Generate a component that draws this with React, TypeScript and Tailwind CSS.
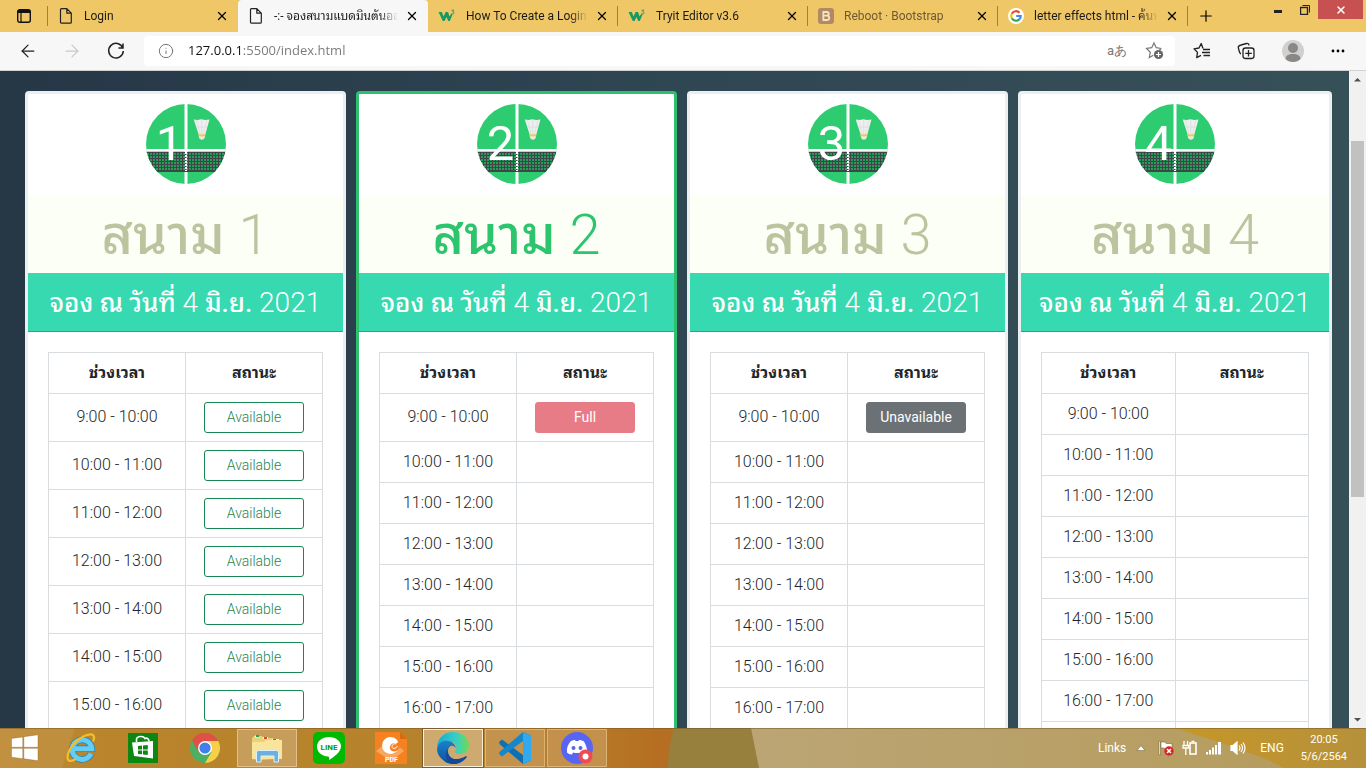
import React from "react";
import { ArrowLeft, ArrowRight, Info, Plus, X } from "lucide-react";

type Status = "Available" | "Full" | "Unavailable";
type Court = { id: number; selected?: boolean; statuses: Status[] };

const slots = [
  "9:00 - 10:00",
  "10:00 - 11:00",
  "11:00 - 12:00",
  "12:00 - 13:00",
  "13:00 - 14:00",
  "14:00 - 15:00",
  "15:00 - 16:00",
  "16:00 - 17:00",
  "17:00 - 18:00",
];

const courts: Court[] = [
  { id: 1, statuses: slots.map((): Status => "Available") },
  { id: 2, selected: true, statuses: ["Full"] },
  { id: 3, statuses: ["Unavailable"] },
  { id: 4, statuses: [] },
];

const statusStyle: Record<Status, string> = {
  Available: "border-[#198754] bg-white font-light text-[#198754]",
  Full: "border-[#e77c87] bg-[#e77c87] font-normal text-white",
  Unavailable: "border-[#6c7176] bg-[#6c7176] font-normal text-white",
};

function W3Icon() {
  return (
    <svg viewBox="0 0 18 16" className="h-4 w-[18px] shrink-0">
      <path d="M.5 4h3.300l1.700 4.500L7.700 4H10l1.500 4.500 1.700-2.500 1.300.5-2.700 6.500h-1.500L8.500 9l-2 4H4.800z" fill="#149a63" />
      <path d="M13.600 2.200h2.200l-1.100 1.500c1.800 0 1.600 2.400-.1 2.300-.6 0-1-.3-1.200-.7" fill="none" stroke="#149a63" strokeWidth="0.900" />
    </svg>
  );
}

function BootstrapIcon() {
  return (
    <svg viewBox="0 0 16 16" className="size-4 shrink-0">
      <rect width="16" height="16" rx="3" fill="#b08a66" />
      <path d="M5.300 4h3.500c2.600 0 2.600 3.500 0 3.700 3.200.1 3.200 4.300 0 4.300H5.300zM5.300 7.700h3.500" fill="none" stroke="#f4e3c0" strokeWidth="1.800" />
    </svg>
  );
}

function GoogleIcon() {
  return (
    <svg viewBox="0 0 16 16" className="size-4 shrink-0">
      <circle cx="8" cy="8" r="8" fill="#fff" />
      <g fill="none" strokeWidth="2.200">
        <path d="M11.500 4.700A4.800 4.800 0 0 0 3.800 5.700" stroke="#ea4335" />
        <path d="M3.800 5.700a4.800 4.800 0 0 0 0 4.600" stroke="#fbbc05" />
        <path d="M3.800 10.300a4.800 4.800 0 0 0 7.500 1.100" stroke="#34a853" />
        <path d="M11.300 11.400A4.500 4.500 0 0 0 12.700 8H8.200" stroke="#4285f4" />
      </g>
    </svg>
  );
}

function PageIcon() {
  return (
    <svg viewBox="0 0 16 16" className="size-4 shrink-0" fill="none" stroke="#222" strokeWidth="1.200" strokeLinejoin="round">
      <path d="M3.500.7h5.300l4.500 4.500v9q0 1-1 1h-8.800q-1 0-1-1V1.700q0-1 1-1zM8.800.7v4.500h4.500" />
    </svg>
  );
}

type TabInfo = { title: string; icon: React.ReactNode; active?: boolean; dim?: boolean };

const tabs: TabInfo[] = [
  { title: "Login", icon: <PageIcon /> },
  { title: "-:- จองสนามแบดมินตันออนไลน์", icon: <PageIcon />, active: true },
  { title: "How To Create a Login Form", icon: <W3Icon /> },
  { title: "Tryit Editor v3.6", icon: <W3Icon /> },
  { title: "Reboot · Bootstrap", icon: <BootstrapIcon />, dim: true },
  { title: "letter effects html - ค้นหาด้วย", icon: <GoogleIcon /> },
];

function TabStrip() {
  return (
    <div className="flex h-8 shrink-0 items-stretch bg-[#efc767]">
      <button aria-label="Tab actions" className="flex w-12 shrink-0 items-center justify-end">
        <svg viewBox="0 0 14 14" className="mr-4 size-[14px]" fill="none" stroke="#111">
          <rect x="0.700" y="0.700" width="12.600" height="12.600" rx="2" strokeWidth="1.400" />
          <path d="M1 2.500h12" strokeWidth="3" />
          <path d="M4 4v9" strokeWidth="1.200" />
        </svg>
        <span className="h-5 w-px bg-[#9b8143]" />
      </button>
      {tabs.map((tab, i) => (
        <div
          key={tab.title}
          className={`flex w-[190px] min-w-0 items-center pl-[10px] ${tab.active ? "rounded-t bg-[#f7f7f7]" : ""}`}
        >
          <button className={`flex min-w-0 flex-1 items-center gap-[10px] text-xs ${tab.dim ? "text-[#6d5a34]" : "text-[#1a1a1a]"}`}>
            {tab.icon}
            <span className="flex-1 overflow-hidden text-left whitespace-nowrap [mask-image:linear-gradient(to_right,black_85%,transparent)]">
              {tab.title}
            </span>
          </button>
          <button aria-label="Close tab" className="ml-1 flex w-5 justify-center">
            <X className="size-[14px]" strokeWidth={2.2} />
          </button>
          <span className={`ml-[5px] h-5 w-px ${i >= 2 ? "bg-[#9b8143]" : ""}`} />
        </div>
      ))}
      <button aria-label="New tab" className="flex w-9 items-center justify-center">
        <Plus className="size-[18px]" strokeWidth={1.6} />
      </button>
      <div className="ml-auto flex items-start">
        <button aria-label="Minimize" className="flex h-[22px] w-[26px] items-center justify-center">
          <span className="h-[3px] w-2 bg-[#222]" />
        </button>
        <button aria-label="Restore" className="flex h-[19px] w-[27px] items-center justify-center">
          <svg viewBox="0 0 10 10" className="size-[10px]" fill="none" stroke="#222">
            <rect x="0.500" y="2.500" width="7" height="7" strokeWidth="1.400" />
            <path d="M2.500.5h7v7" />
          </svg>
        </button>
        <button aria-label="Close" className="mr-[3px] flex h-[19px] w-[45px] items-center justify-center bg-[#c75050] text-white">
          <X className="size-3" strokeWidth={3} />
        </button>
      </div>
    </div>
  );
}

function Toolbar() {
  return (
    <div className="flex h-[39px] shrink-0 items-center border-b border-[#cfd3d6] bg-[#f7f7f7] text-[#222]">
      <div className="flex w-36 items-center gap-6 pl-[18px]">
        <button aria-label="Back"><ArrowLeft className="size-5" strokeWidth={1.5} /></button>
        <button aria-label="Forward"><ArrowRight className="size-5 text-[#c9c9c9]" strokeWidth={1.5} /></button>
        <button aria-label="Refresh">
          <svg viewBox="0 0 20 20" className="size-5" fill="none" stroke="currentColor" strokeWidth="1.500">
            <path d="M16.800 7A7.300 7.300 0 1 0 17.300 10M17 2.500V7h-4.500" />
          </svg>
        </button>
      </div>
      <div className="flex h-[30px] flex-1 items-center rounded bg-white pr-[10px] pl-[14px]">
        <Info className="size-4 text-[#777]" strokeWidth={1.5} />
        <label htmlFor="address" className="sr-only">Address</label>
        <input
          id="address"
          defaultValue="127.0.0.1:5500/index.html"
          className="ml-[14px] min-w-0 flex-1 bg-[linear-gradient(to_right,#111_54px,#777_54px)] bg-clip-text font-['Open_Sans',sans-serif] text-[13px] text-transparent outline-none"
        />
        <button className="text-[13px] text-[#777]">aあ</button>
        <button aria-label="Add to favorites" className="ml-[18px]">
          <svg viewBox="0 0 20 20" className="size-5" fill="none" stroke="#777" strokeWidth="1.200">
            <path d="M16.300 7.500l-5.100-.8L9 2 6.700 6.700l-5.200.8 3.800 3.700-1 5.300 4-2.200M16.300 7.500l-2 1.800" />
            <circle cx="13.500" cy="13.500" r="4.600" fill="#666" stroke="none" />
            <path d="M13.500 11v5M11 13.500h5" stroke="white" />
          </svg>
        </button>
      </div>
      <div className="flex w-[191px] items-center justify-between pr-5 pl-[18px]">
        <button aria-label="Favorites">
          <svg viewBox="0 0 18 18" className="size-[18px]" fill="none" stroke="currentColor" strokeWidth="1.300">
            <path d="M10 6.500L8.200 1.500 6 6l-5 .8 3.500 3.600-.8 5.200L8 13.400M10 7.500h7M9 10.500h8M10.500 13.500H17" strokeLinejoin="round" />
          </svg>
        </button>
        <button aria-label="Collections">
          <svg viewBox="0 0 18 18" className="size-[18px]" fill="none" stroke="currentColor" strokeWidth="1.300">
            <path d="M4 12C2.500 11.500 2 9 1.300 5.500 1.200 3.800 2.500 3.300 4 3l5.500-1.500c1.500-.3 2.300.5 2.500 2" />
            <rect x="6" y="6" width="11" height="10.500" rx="2.500" />
            <path d="M11.500 8v6.500M8.300 11.300h6.500" />
          </svg>
        </button>
        <button aria-label="Profile">
          <svg viewBox="0 0 22 22" className="size-[22px]">
            <circle cx="11" cy="11" r="11" fill="#d2d0ce" />
            <circle cx="11" cy="8" r="5" fill="#8a8886" />
            <path d="M3.500 19c0-3.500 3-5 7.500-5s7.500 1.500 7.500 5c-3.800 4-11.200 4-15 0z" fill="#8a8886" />
          </svg>
        </button>
        <button aria-label="Settings and more">
          <svg viewBox="0 0 16 16" className="size-4"><circle cx="3" cy="8" r="1.400" /><circle cx="8" cy="8" r="1.400" /><circle cx="13" cy="8" r="1.400" /></svg>
        </button>
      </div>
    </div>
  );
}

function CourtLogo({ id }: { id: number }) {
  return (
    <svg viewBox="0 0 80 80" className="size-20">
      <defs>
        <clipPath id={`disc-${id}`}><circle cx="40" cy="40" r="40" /></clipPath>
        <pattern id={`net-${id}`} width="3" height="3" patternUnits="userSpaceOnUse">
          <path d="M0 .5h3M.5 0v3" stroke="#3f4548" />
        </pattern>
      </defs>
      <g clipPath={`url(#disc-${id})`}>
        <rect width="80" height="80" fill="#2ecc71" />
        <rect x="38.500" width="3" height="80" fill="#fff" />
        <rect y="48" width="80" height="20" fill="#25794c" fillOpacity="0.600" />
        <rect y="48" width="80" height="20" fill={`url(#net-${id})`} />
        <path d="M0 67.500h80" stroke="#3f4548" />
        <rect y="45" width="80" height="2.500" fill="#fff" />
        <path d="M40 48v19" stroke="#fff" strokeWidth="2" strokeDasharray="2 1" />
      </g>
      <text x="23.500" y="55.500" textAnchor="middle" fill="#fff" fontSize="49" className="font-[Roboto,sans-serif]">{id}</text>
      <path d="M47.700 15.500l4 .5 3.500-.8 4 .8 4.300-.5L59 31.500h-6z" fill="#edf0ee" />
      <path d="M50.500 16l3.500 14M55.700 16v14M61 16l-3.500 14M50 23h11" stroke="#d3d9d6" strokeWidth="0.600" />
      <path d="M52.800 32H59c.2 5-6.400 5-6.200 0z" fill="#e6e8e6" />
      <path d="M52.300 31.200h7" stroke="#f0c75a" strokeWidth="2" />
    </svg>
  );
}

function CourtCard({ court }: { court: Court }) {
  return (
    <section className={`overflow-hidden rounded border-[3px] bg-white text-center ${court.selected ? "border-[#2ebf6f]" : "border-[#eceff1]"}`}>
      <div className="flex justify-center pt-[10px] pb-[11px]"><CourtLogo id={court.id} /></div>
      <h2 className={`h-[78px] bg-[#fbfff5] pt-1 text-[56px] leading-[72px] font-light ${court.selected ? "text-[#2dc46e]" : "text-[#bcc49f]"}`}>
        <span className="text-[54px] font-medium">สนาม</span> {court.id}
      </h2>
      <p className="h-[59px] border-b border-[#27ae60] bg-[#37d9b0] pt-px text-[28px] leading-[57px] font-light whitespace-nowrap text-white">
        <span className="text-[26px] font-medium">จอง ณ วันที่</span> 4 <span className="text-[26px] font-medium">มิ.ย.</span> 2021
      </p>
      <div className="p-5">
        <table className="w-full table-fixed border-collapse text-base text-[#212529] [&_td]:border [&_td]:border-[#dadde0] [&_td]:p-2 [&_td]:align-baseline [&_th]:border [&_th]:border-[#dadde0] [&_th]:p-2">
          <thead>
            <tr><th className="font-bold">ช่วงเวลา</th><th className="font-bold">สถานะ</th></tr>
          </thead>
          <tbody>
            {slots.map((slot, i) => {
              const status = court.statuses[i];
              return (
                <tr key={slot}>
                  <td className="font-light">{slot}</td>
                  <td>
                    {status && (
                      <button className={`mx-auto block h-[31px] w-[100px] rounded-[3px] border pb-[2px] text-sm leading-5 ${statusStyle[status]}`}>
                        {status}
                      </button>
                    )}
                  </td>
                </tr>
              );
            })}
          </tbody>
        </table>
      </div>
    </section>
  );
}

function Scrollbar() {
  return (
    <div className="flex w-[17px] shrink-0 flex-col items-center bg-[#f1f1f1]">
      <svg viewBox="0 0 17 17" className="size-[17px]"><path d="M5 10.500L8.500 7l3.500 3.500z" fill="#505050" /></svg>
      <div className="h-[53px]" />
      <div className="h-[356px] w-[13px] bg-[#c1c1c1]" />
      <div className="flex-1" />
      <svg viewBox="0 0 17 17" className="size-[17px]"><path d="M5 7l3.500 3.500L12 7z" fill="#505050" /></svg>
    </div>
  );
}

const appIcons: Record<string, React.ReactNode> = {
  Start: (
    <svg viewBox="0 0 28 28" className="size-7" fill="#fff" stroke="#8e6423" strokeWidth="0.400">
      <path d="M.5 4.500l11.300-1.600v10.400H.5zM12.800 2.700L27 .8v12.500H12.800zM.5 14.300h11.300v10.400L.5 23.200zM12.800 14.300H27v12.500l-14.200-2z" />
    </svg>
  ),
  "Internet Explorer": (
    <svg viewBox="0 0 32 32" className="size-8">
      <path d="M26 21.500A9.800 9.800 0 1 1 26.800 16.800H9" fill="none" stroke="#2682bb" strokeWidth="6.500" />
      <path d="M26 21.500A9.800 9.800 0 1 1 26.800 16.800H9" fill="none" stroke="#64cdf1" strokeWidth="5" />
      <path d="M28 9.500C30.500 4 28.500 1 22 3 12 6 2 18 2.500 26c.2 4 4.500 3.500 8.500 1" fill="none" stroke="#f4bd29" strokeWidth="2.300" />
    </svg>
  ),
  Store: (
    <svg viewBox="0 0 30 30" className="size-[30px]">
      <rect width="30" height="30" fill="#0b8712" />
      <path d="M8.500 9V6.500c0-3.500 7-4 8.500-1 1.500-1 4 0 4 3" fill="none" stroke="#fff" strokeWidth="1.600" />
      <path d="M4 9.500L25 8v17.500L6 23z" fill="#fff" />
      <path d="M10 13l4-.4v4h-4zM15 12.500l4.800-.5v4.600H15zM10 17.500h4v3.800l-4-.4zM15 17.500h4.800V22l-4.800-.5z" fill="#0b8712" />
    </svg>
  ),
  Chrome: (
    <svg viewBox="0 0 30 30" className="size-[30px]">
      <circle cx="15" cy="15" r="15" fill="#4caf61" />
      <path d="M2 7.500l7 12 6-4.500 13-7.500A15 15 0 0 0 2 7.500z" fill="#df5146" />
      <path d="M15 8h13.300A15 15 0 0 1 15 30l6.500-11z" fill="#f8cf48" />
      <circle cx="15" cy="15" r="7" fill="#fff" /><circle cx="15" cy="15" r="5.600" fill="#427fed" />
    </svg>
  ),
  "File Explorer": (
    <svg viewBox="0 0 32 30" className="h-[30px] w-8">
      <path d="M1 5l2-2h8l2 2h9l1 2h8v19H1z" fill="#e9d178" /><path d="M4 2.500h4v2H4zM12 4h5v2h-5zM21 6h7v2h-7z" fill="#f9f9ef" />
      <path d="M5 2h3v2H5z" fill="#26a455" /><path d="M13 4h3v2h-3z" fill="#d94836" /><path d="M22 6h3v2h-3z" fill="#2e85cd" />
      <path d="M1 9h12l2-2h16v19c-9-1-20 2-30 0z" fill="#f8e59b" />
      <path d="M5.500 29V19.500q0-2 2-2h18q2 0 2 2V29H23v-6H10v6z" fill="#6db0df" stroke="#d9f2fc" />
    </svg>
  ),
  LINE: (
    <svg viewBox="0 0 32 32" className="size-8">
      <rect width="32" height="32" rx="5" fill="#00b900" />
      <path d="M28 14c0 6-6.500 10.500-12 14 .5-2 .7-3-1-3.500C8.500 24 4 20 4 14.500 4 9 9.500 5 16 5s12 4 12 9z" fill="#fff" />
      <text x="16" y="17.500" textAnchor="middle" fontSize="8" fill="#00a000" className="font-bold">LINE</text>
    </svg>
  ),
  "Foxit PDF": (
    <svg viewBox="0 0 32 32" className="size-8">
      <path d="M0 0h25l7 7v25H0z" fill="#f58220" /><path d="M25 0v7h7" fill="#d9690f" /><path d="M1 19L16 7l13 12-13 10z" fill="#f9a661" />
      <circle cx="15.500" cy="13.500" r="8.500" fill="#fff" />
      <path d="M24 9.500c-1.500 2-3.500 1.500-5.500 1.800-4 .7-5 6-1.500 7.700 3 1.300 6-.5 7.500-3z" fill="#f58220" />
      <path d="M22.500 14c-2 3.500-5.500 3-5.500.5 0-2 2-3 4.500-2.800" fill="none" stroke="#fff" />
      <text x="16.500" y="29.500" textAnchor="middle" fontSize="7" fill="#fff" className="font-bold">PDF</text>
    </svg>
  ),
  Edge: (
    <svg viewBox="0 0 32 32" className="size-8">
      <defs>
        <linearGradient id="edge-wave" x1="0" x2="1"><stop stopColor="#18a9d3" /><stop offset="0.600" stopColor="#38cfc4" /><stop offset="1" stopColor="#6edb50" /></linearGradient>
        <linearGradient id="edge-body" x1="0" y1="0" x2="0" y2="1"><stop stopColor="#1982c9" /><stop offset="1" stopColor="#124e9d" /></linearGradient>
      </defs>
      <path d="M0 15C1 6 7 0 16 0c9 0 16 6 16 13.500 0 6-5 8.500-10 8.500-4 0-5-2-3-4 2-7-4-9-8-8-5 .5-9 3-11 5z" fill="url(#edge-wave)" />
      <path d="M0 17c1-6 6-9 11-8 4 0 8 4 7.500 7C16 12 11 14 11 19c0 7 8 12 18 6-6 9-17 9-23 3-4-3-6-7-6-11z" fill="url(#edge-body)" />
      <path d="M11 17c-2 8 6 14 18 7l1 1c-4 5-9 7-14 7-7-2-9-10-5-15z" fill="#12499a" />
    </svg>
  ),
  "Visual Studio Code": (
    <svg viewBox="0 0 32 32" className="size-8">
      <path d="M24 0l8 3.500v25L24 32 1 12.500 0 10l3-2.500L24 23z" fill="#0c70b3" />
      <path d="M24 0v9L3 24.500 0 22l.5-2z" fill="#1687cc" /><path d="M24 0l8 3.500v25L24 32z" fill="#32a9ed" />
    </svg>
  ),
  Discord: (
    <svg viewBox="0 0 32 32" className="size-8">
      <circle cx="16" cy="16" r="16" fill="#5865f2" />
      <path d="M10 9c2-1 3-1 4-1l.5 1h3l.5-1c2 0 3 .5 5 1.500 2 4 3.500 7 3 11-2 1.500-3 2-5 2l-1-2c-3 .8-5 .8-8 0l-1 2c-2 0-4-1-5-2-.5-5 1-8 4-11.500z" fill="#fff" />
      <circle cx="12.500" cy="16" r="2" fill="#5865f2" /><circle cx="19.500" cy="16" r="2" fill="#5865f2" />
      <circle cx="24.500" cy="24.500" r="7" fill="#ed4b55" /><circle cx="24.500" cy="24.500" r="3" fill="#fff" />
    </svg>
  ),
};

const openApps: Record<string, string> = {
  "File Explorer": "border border-[#e3c089] bg-[#c79d5b]",
  Edge: "border border-[#f7eedb] bg-[#cfaa70] outline outline-[#7d5c2b]",
  "Visual Studio Code": "border border-[#dcb478] bg-[#c3924d]",
  Discord: "border border-[#dcb478] bg-[#c3914c]",
};

function Taskbar() {
  return (
    <footer className="relative flex h-10 shrink-0 items-center overflow-hidden bg-[#b97f29] text-xs text-white">
      <svg viewBox="0 0 1366 40" preserveAspectRatio="none" className="absolute inset-0 size-full">
        <defs>
          <linearGradient id="desk"><stop stopColor="#bd8a35" /><stop offset="0.080" stopColor="#b9842b" /><stop offset="0.380" stopColor="#b5822c" /><stop offset="0.480" stopColor="#b66f22" /></linearGradient>
          <linearGradient id="sand"><stop stopColor="#bba574" /><stop offset="1" stopColor="#b59b5b" /></linearGradient>
          <linearGradient id="gold"><stop stopColor="#c69728" /><stop offset="1" stopColor="#b6913b" /></linearGradient>
        </defs>
        <path d="M0 0h1366v40H0z" fill="url(#desk)" />
        <path d="M0 0h75L62 40H0z" fill="#c5984b" fillOpacity="0.500" />
        <path d="M674 0h90v40h-96c0-15 2-28 6-40z" fill="#977f3d" />
        <path d="M751 0h615v40H759z" fill="url(#sand)" />
        <path d="M1175 0h191v40h-82c-30-16-70-27-109-40z" fill="url(#gold)" />
        <path d="M0 .5h1366" stroke="#735226" strokeOpacity="0.500" />
      </svg>
      <nav aria-label="Taskbar" className="relative flex h-full items-center gap-[2px]">
        {Object.entries(appIcons).map(([name, icon]) => (
          <button
            key={name}
            aria-label={name}
            className={`flex h-[38px] items-center justify-center ${name === "Start" ? "w-[49px]" : "w-[60px]"} ${openApps[name] ?? ""}`}
          >
            {icon}
          </button>
        ))}
      </nav>
      <div className="relative ml-auto flex items-center pr-[19px]">
        <button>Links</button>
        <button aria-label="Show hidden icons" className="ml-[10px]">
          <svg viewBox="0 0 10 6" className="h-[6px] w-[10px]"><path d="M5 .5l4 5H1z" fill="#fff" stroke="#6e5a32" strokeWidth="0.500" /></svg>
        </button>
        <svg viewBox="0 0 16 16" className="ml-3 size-4">
          <path d="M1 1h1.500v14H1zM3 2h3.500l2 1.500H14v6H8L6 8H3z" fill="#fff" stroke="#68522a" strokeWidth="0.500" />
          <circle cx="11" cy="11" r="4.700" fill="#d32725" /><path d="M9 9l4 4M13 9l-4 4" stroke="#fff" strokeWidth="1.500" />
        </svg>
        <svg viewBox="0 0 16 16" className="ml-2 size-4" fill="none" stroke="#fff">
          <rect x="8" y="3" width="6" height="11" strokeWidth="1.600" /><path d="M9.500 1.500h3" strokeWidth="1.500" />
          <path d="M2 1v4M5.500 1v4M1 5.500h5.500V8H1zM3.800 8v7" strokeWidth="1.300" />
        </svg>
        <svg viewBox="0 0 16 14" className="ml-2 h-[14px] w-4" fill="#fff">
          <path d="M0 11h2v2.500H0zM3 9h2v4.500H3zM6 6.500h2v7H6zM9 4h2v9.500H9zM12 1h3v12.500h-3z" />
        </svg>
        <svg viewBox="0 0 16 14" className="ml-2 h-[14px] w-4" fill="none" stroke="#fff" strokeWidth="1.200">
          <path d="M1 4.500h2L7 1v12L3 9.500H1z" fill="#fff" /><path d="M9 4.500q2 2.500 0 5M11 3q3 4 0 8M13 1.500q4 5.500 0 11" />
        </svg>
        <button className="ml-[14px]">ENG</button>
        <div className="ml-[17px] text-center text-[11px] leading-[17px]"><div>20:05</div><div>5/6/2564</div></div>
      </div>
    </footer>
  );
}

export default function App() {
  return (
    <div className="flex h-screen flex-col overflow-hidden font-[Roboto,'Noto_Sans_Thai_Looped',Loma,Garuda,'Noto_Serif_Thai',sans-serif]">
      <TabStrip />
      <Toolbar />
      <div className="flex min-h-0 flex-1">
        <main className="grid min-w-0 flex-1 grid-cols-[321fr_321fr_321fr_314fr] items-start gap-[10px] overflow-hidden bg-[linear-gradient(to_right,#263746,#2f4653_50%,#365058)] pt-5 pr-[17px] pl-[25px]">
          {courts.map((court) => <CourtCard key={court.id} court={court} />)}
        </main>
        <Scrollbar />
      </div>
      <Taskbar />
    </div>
  );
}
